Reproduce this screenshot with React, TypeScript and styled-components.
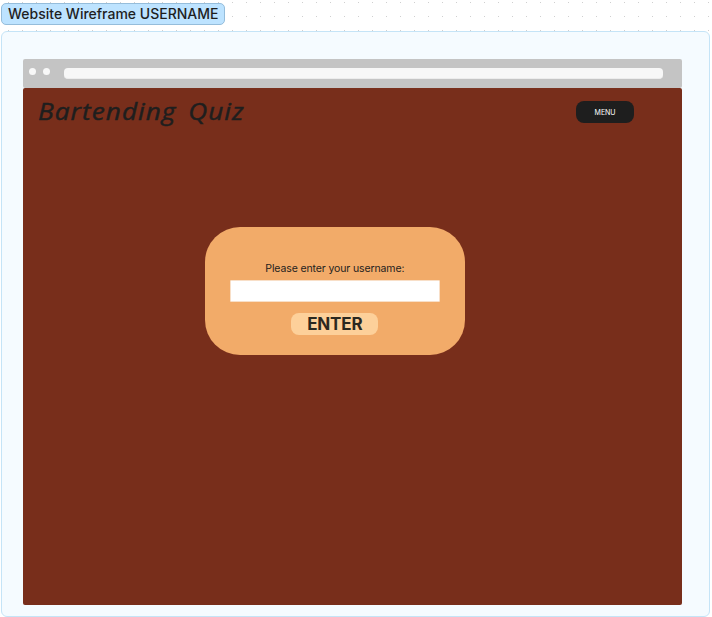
import React from "react";
import styled, { createGlobalStyle } from "styled-components";

const GlobalStyle = createGlobalStyle`
  * { box-sizing: border-box; }
  html, body { margin: 0; padding: 0; }
  body { background: #fff; font-family: Inter, "Liberation Sans", sans-serif; overflow: hidden; }
`;

const Canvas = styled.main`
  width: 712px;
  height: 617px;
  padding: 3px 2px 0 1.4px;
  background-color: #fff;
  background-image: radial-gradient(circle at 6.5px 6.5px, #cfcfcf 0, #cfcfcf 0.6px, transparent 0.95px);
  background-size: 14px 14px;
  background-position: 2px -4px;
`;

const SectionTag = styled.div`
  width: 224px;
  height: 22px;
  border: 1px solid #95bddb;
  border-radius: 5px;
  background: #bde3ff;
  color: #1e1e1e;
  font-size: 14px;
  font-weight: 500;
  line-height: 20px;
  padding-left: 5.6px;
  white-space: nowrap;
`;

const Section = styled.section`
  width: 708.5px;
  height: 586px;
  margin-top: 6px;
  padding: 27px 0 0 20.2px;
  border: 1px solid #c5e4f7;
  border-radius: 6px;
  background: #f5fbff;
`;

const BrowserBar = styled.header`
  display: flex;
  align-items: center;
  width: 659.5px;
  height: 29px;
  padding-left: 6.8px;
  border-radius: 2px;
  background: #c4c4c4;
`;

const WindowDot = styled.span`
  width: 7px;
  height: 7px;
  margin: 0 7px 4px 0;
  border-radius: 50%;
  background: #f8f8f8;
`;

const AddressField = styled.div`
  width: 598.5px;
  height: 11px;
  margin-left: 7px;
  border-radius: 4px;
  background: #f7f7f7;
  border-bottom: 1px solid #ececec;
`;

const Page = styled.div`
  display: flex;
  flex-direction: column;
  align-items: center;
  width: 659.5px;
  height: 517px;
  border-radius: 2px;
  background: #782e1b;
`;

const Nav = styled.nav`
  display: flex;
  justify-content: space-between;
  width: 100%;
  height: 139px;
  padding: 13px 48px 0 15.5px;
`;

const Title = styled.h1`
  margin: -6px 0 0;
  color: #1e1e1e;
  font-family: "Open Sans", sans-serif;
  font-size: 23px;
  font-style: italic;
  font-weight: 500;
  line-height: 32px;
  letter-spacing: 0.9px;
  word-spacing: 3.5px;
  white-space: nowrap;
  -webkit-text-stroke: 0.45px #1e1e1e;
  transform: scaleX(1.14);
  transform-origin: left center;
`;

const MenuButton = styled.button`
  width: 58px;
  height: 22px;
  padding: 1px 0 0;
  border: 0;
  border-radius: 8px;
  background: #1e1e1e;
  color: #fff;
  font: 400 7px/21px Inter, sans-serif;
`;

const LoginCard = styled.form`
  display: flex;
  flex-direction: column;
  align-items: center;
  width: 260px;
  height: 128px;
  margin-right: 35px;
  padding-top: 33px;
  border-radius: 35px;
  background: #f2ab69;
`;

const Prompt = styled.label`
  height: 16px;
  color: #1e1e1e;
  font-size: 10.5px;
  line-height: 17px;
  letter-spacing: -0.12px;
  white-space: nowrap;
`;

const UsernameInput = styled.input`
  width: 210px;
  height: 22px;
  margin-top: 4px;
  padding: 0 6px;
  border: 1px solid #f8dfc8;
  border-radius: 1px;
  background: #fff;
  outline: none;
`;

const EnterButton = styled.button`
  width: 87px;
  height: 22px;
  margin-top: 11px;
  padding: 1px 0 0;
  border: 0;
  border-radius: 8px;
  background: #fdd09a;
  color: #2b2820;
  font: 700 17px/21px Inter, sans-serif;
  letter-spacing: -0.15px;
`;

export default function App() {
  return (
    <>
      <GlobalStyle />
      <Canvas>
        <SectionTag>Website Wireframe USERNAME</SectionTag>
        <Section>
          <BrowserBar>
            <WindowDot />
            <WindowDot />
            <AddressField />
          </BrowserBar>
          <Page>
            <Nav>
              <Title>Bartending Quiz</Title>
              <MenuButton type="button">MENU</MenuButton>
            </Nav>
            <LoginCard>
              <Prompt htmlFor="username">Please enter your username:</Prompt>
              <UsernameInput id="username" />
              <EnterButton type="button">ENTER</EnterButton>
            </LoginCard>
          </Page>
        </Section>
      </Canvas>
    </>
  );
}
